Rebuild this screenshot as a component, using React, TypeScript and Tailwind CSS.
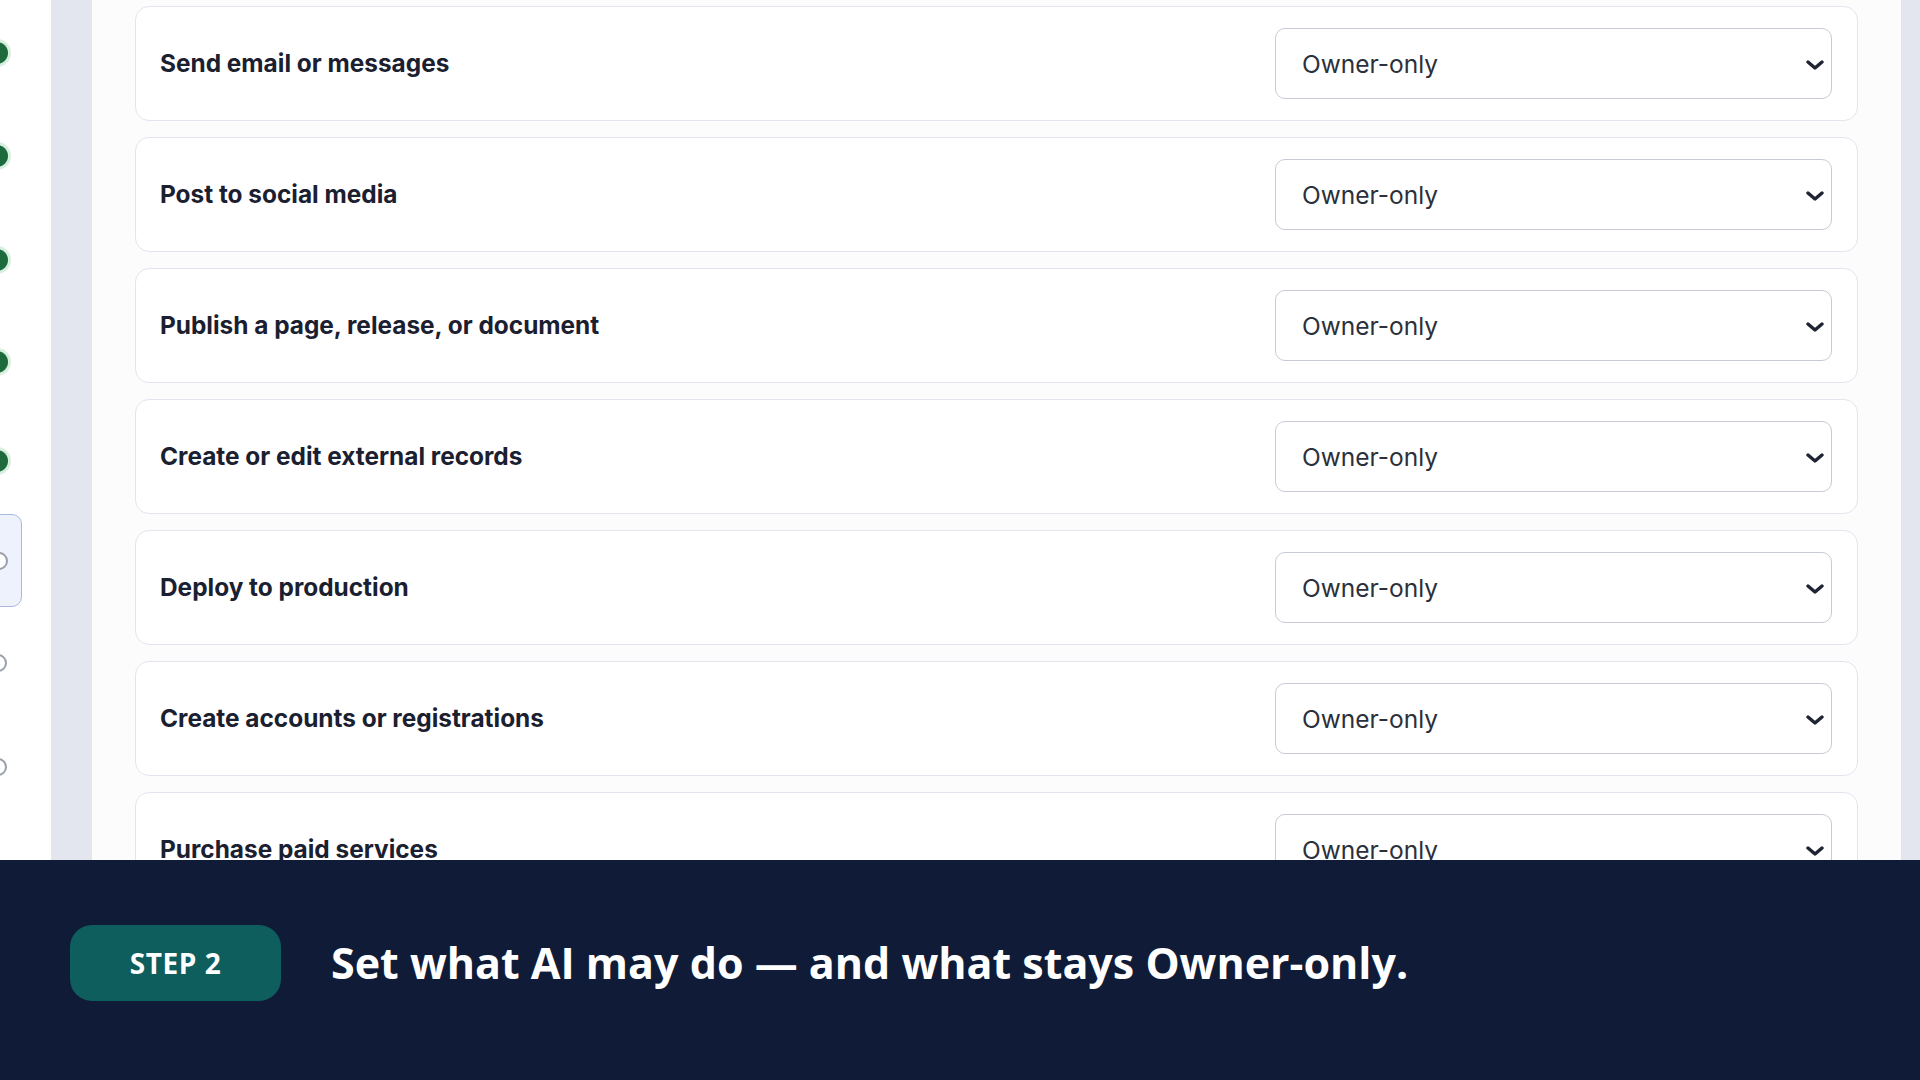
const actions = [
  "Send email or messages",
  "Post to social media",
  "Publish a page, release, or document",
  "Create or edit external records",
  "Deploy to production",
  "Create accounts or registrations",
  "Purchase paid services",
];

type Step = { state: "done" | "current" | "todo"; h: string };

const steps: Step[] = [
  { state: "done", h: "h-[103px]" },
  { state: "done", h: "h-[104px]" },
  { state: "done", h: "h-[103px]" },
  { state: "done", h: "h-[101px]" },
  { state: "done", h: "h-[98px]" },
  { state: "current", h: "h-[101px]" },
  { state: "todo", h: "h-[104px]" },
  { state: "todo", h: "h-[104px]" },
];

function Chevron() {
  return (
    <svg width="18" height="10" viewBox="0 0 18 10" fill="none">
      <path d="M2 2 L9 8 L16 2" stroke="#1f2433" strokeWidth="3.4" strokeLinecap="round" strokeLinejoin="round" />
    </svg>
  );
}

function StepRail() {
  return (
    <div className="w-[51px] shrink-0 overflow-hidden bg-white">
      <div className="flex flex-col pt-[1px]">
        {steps.map((s, i) => (
          <div key={i} className={`${s.h} flex items-center`}>
            {s.state === "done" && (
              <div className="-ml-[14px] h-[22px] w-[22px] rounded-full bg-[#1d6b3c] ring-[3px] ring-[#d9efdf]" />
            )}
            {s.state === "current" && (
              <div className="-ml-[20px] flex h-[93px] w-[42px] items-center rounded-[10px] border border-[#aab7df] bg-[#eef2fd] pl-[9px]">
                <div className="h-[18px] w-[18px] rounded-full border-2 border-[#9aa0aa] bg-white" />
              </div>
            )}
            {s.state === "todo" && (
              <div className="-ml-[11px] h-[18px] w-[18px] rounded-full border-2 border-[#9aa0aa] bg-white" />
            )}
          </div>
        ))}
      </div>
    </div>
  );
}

export default function App() {
  return (
    <div className="flex h-screen w-full flex-col overflow-hidden bg-white" style={{ fontFamily: "Inter, 'Noto Sans', sans-serif" }}>
      <div className="flex h-[860px] shrink-0 overflow-hidden">
        <StepRail />
        <div className="w-[41px] shrink-0 bg-[#e3e6ee]" />
        <main className="flex-1 overflow-hidden bg-[#fcfcfd] px-[43px] pt-[6px]">
          <div className="flex flex-col gap-4">
            {actions.map((a) => (
              <div
                key={a}
                className="flex h-[115px] shrink-0 items-center justify-between rounded-[14px] border border-[#e2e5ee] bg-white pl-6 pr-[25px]"
              >
                <span className="text-[24.4px] font-bold text-[#1b2030]">{a}</span>
                <div className="flex h-[71px] w-[557px] items-center justify-between rounded-[10px] border border-[#c6cbd5] bg-white pl-[26px] pr-[7px] pt-[2px]">
                  <span className="text-[24.5px] text-[#2b303b]">Owner-only</span>
                  <Chevron />
                </div>
              </div>
            ))}
          </div>
        </main>
        <div className="w-[19px] shrink-0 bg-[#e3e6ee]" />
      </div>
      <footer
        className="flex flex-1 items-center gap-[50px] bg-[#101c37] pb-[14px] pl-[70px]"
        style={{ fontFamily: "'Open Sans', 'Noto Sans', sans-serif" }}
      >
        <div className="flex h-[76px] w-[211px] items-center justify-center rounded-[22px] bg-[#0e5e5d] text-[28px] font-bold tracking-[0.02em] text-white">
          STEP 2
        </div>
        <div className="text-[43px] font-bold text-white">Set what AI may do — and what stays Owner-only.</div>
      </footer>
    </div>
  );
}
